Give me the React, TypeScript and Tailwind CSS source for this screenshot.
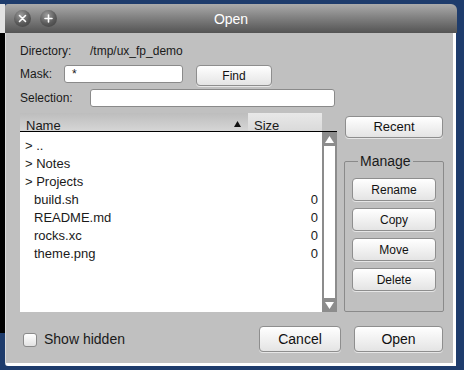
import React from "react";

// Motif-like "Open" file dialog on a navy desktop

const font = { fontFamily: '"Liberation Sans", Arial, sans-serif' };

const Btn: React.FC<{ label: string; className?: string }> = ({ label, className = "" }) => (
  <button
    className={`flex items-center justify-center rounded-[4px] border border-[#8e8e8e] bg-linear-to-b from-white to-[#e4e4e4] text-[#111] shadow-[0_1px_0_rgba(255,255,255,0.6)] ${className}`}
  >
    {label}
  </button>
);

const files = [
  { name: "> ..", dir: true },
  { name: "> Notes", dir: true },
  { name: "> Projects", dir: true },
  { name: "build.sh", size: "0" },
  { name: "README.md", size: "0" },
  { name: "rocks.xc", size: "0" },
  { name: "theme.png", size: "0" },
];

const Circle: React.FC<{ kind: "close" | "add" }> = ({ kind }) => (
  <div className="flex h-[17px] w-[17px] items-center justify-center rounded-full bg-[radial-gradient(circle_at_40%_30%,#9c9c9c,#5a5a5a_55%,#3a3a3a)]">
    <svg width="9" height="9" viewBox="0 0 9 9">
      {kind === "close" ? (
        <path d="M1.5 1.5 L7.5 7.5 M7.5 1.5 L1.5 7.5" stroke="#fff" strokeWidth="1.6" strokeLinecap="round" />
      ) : (
        <path d="M4.5 1 V8 M1 4.5 H8" stroke="#fff" strokeWidth="1.6" strokeLinecap="round" />
      )}
    </svg>
  </div>
);

export default function App() {
  return (
    <div className="flex h-[370px] w-[464px] overflow-hidden bg-[#1e3c6c]" style={font}>
      {/* strip of whatever lies behind the window */}
      <div className="flex w-[5px] flex-col">
        <div className="h-[4px]" />
        <div className="h-[29px] bg-[#e2e2e2]" />
        <div className="h-[300px] bg-black" />
      </div>

      {/* Window */}
      <div className="mt-[4px] flex w-[452px] flex-col">
        {/* Title bar */}
        <div className="grid h-[29px] grid-cols-[1fr_auto_1fr] items-center rounded-tl-[3px] rounded-tr-[6px] bg-linear-to-b from-[#ababab] to-[#545454]">
          <div className="flex items-center gap-[9px] pl-[9px]">
            <Circle kind="close" />
            <Circle kind="add" />
          </div>
          <div className="pt-[1px] text-[14px] text-white">Open</div>
          <div />
        </div>

        {/* Body */}
        <div className="flex h-[333px] w-[451px] flex-col rounded-bl-[3px] border-b-[3px] border-l border-r-[3px] border-b-white border-l-[#dadada] border-r-white bg-[#c0c0c0] pl-[14px] pr-[10px] text-[12px] text-[#1a1a1a]">
          {/* Directory */}
          <div className="mt-[10px] flex h-[16px] items-center">
            <span className="w-[70px]">Directory:</span>
            <span>/tmp/ux_fp_demo</span>
          </div>

          {/* Mask */}
          <div className="mt-[6px] flex h-[21px] items-start">
            <span className="flex h-[18px] w-[44px] items-center">Mask:</span>
            <div className="flex h-[18px] w-[119px] items-center rounded-[3px] border border-[#8a8a8a] bg-white pl-[7px]">*</div>
            <Btn label="Find" className="ml-[13px] h-[21px] w-[76px] text-[12px]" />
          </div>

          {/* Selection */}
          <div className="mt-[3px] flex h-[18px] items-center">
            <span className="w-[70px]">Selection:</span>
            <div className="h-[18px] w-[245px] rounded-[3px] border border-[#8a8a8a] bg-white" />
          </div>

          {/* List + side buttons */}
          <div className="mt-[6px] flex">
            <div className="flex w-[317px] flex-col">
              {/* header */}
              <div className="flex h-[19px] border-b border-black text-[13px]">
                <div className="flex w-[228px] items-end justify-between bg-linear-to-b from-[#bdbdbd] to-[#d6d6d6] pl-[6px] pr-[7px] leading-[10px]">
                  <span>Name</span>
                  <svg width="7" height="6" viewBox="0 0 7 6" className="mb-[4px]">
                    <path d="M3.5 0 L7 6 H0 Z" fill="#111" />
                  </svg>
                </div>
                <div className="flex w-[74px] items-end bg-linear-to-b from-[#e8e8e8] to-[#dadada] pl-[6px] leading-[10px]">
                  Size
                </div>
                <div className="flex-1" />
              </div>
              {/* rows */}
              <div className="flex h-[180px]">
                <div className="flex w-[302px] flex-col bg-white pt-[5px] text-[13px]">
                  {files.map((f) => (
                    <div key={f.name} className="flex h-[18px] items-center pr-[4px]">
                      <span className={f.dir ? "pl-[5px]" : "pl-[14px]"}>{f.name}</span>
                      <span className="ml-auto">{f.size ?? ""}</span>
                    </div>
                  ))}
                </div>
                {/* scrollbar */}
                <div className="flex w-[15px] flex-col bg-[#8c8c8c] px-[2px]">
                  <div className="flex h-[14px] items-center justify-center">
                    <svg width="9" height="7" viewBox="0 0 9 7">
                      <path d="M4.5 0 L9 7 H0 Z" fill="#fff" />
                    </svg>
                  </div>
                  <div className="flex-1 bg-white" />
                  <div className="flex h-[14px] items-center justify-center">
                    <svg width="9" height="7" viewBox="0 0 9 7">
                      <path d="M0 0 H9 L4.5 7 Z" fill="#fff" />
                    </svg>
                  </div>
                </div>
              </div>
            </div>

            {/* right column */}
            <div className="ml-[7px] flex w-[99px] flex-col">
              <Btn label="Recent" className="ml-[1px] mt-[3px] h-[22px] w-[98px] text-[13px]" />
              <fieldset className="mt-[15px] h-[159px] rounded-[2px] border border-[#8a8a8a] px-[7px]">
                <legend className="ml-[6px] px-[2px] text-[14px] leading-[16px]">Manage</legend>
                <div className="mt-[9px] flex flex-col gap-[7px]">
                  {["Rename", "Copy", "Move", "Delete"].map((b) => (
                    <Btn key={b} label={b} className="h-[23px] w-[84px] text-[12px]" />
                  ))}
                </div>
              </fieldset>
            </div>
          </div>

          {/* Bottom bar */}
          <div className="mt-[14px] flex h-[26px] items-center text-[14px]">
            <div className="ml-[3px] mt-[1px] h-[14px] w-[14px] rounded-[3px] border border-[#8a8a8a] bg-linear-to-b from-white to-[#e2e2e2]" />
            <span className="ml-[7px]">Show hidden</span>
            <Btn label="Cancel" className="ml-auto h-[26px] w-[82px] text-[14px]" />
            <Btn label="Open" className="ml-[13px] h-[26px] w-[89px] text-[14px]" />
          </div>
        </div>
      </div>
    </div>
  );
}
